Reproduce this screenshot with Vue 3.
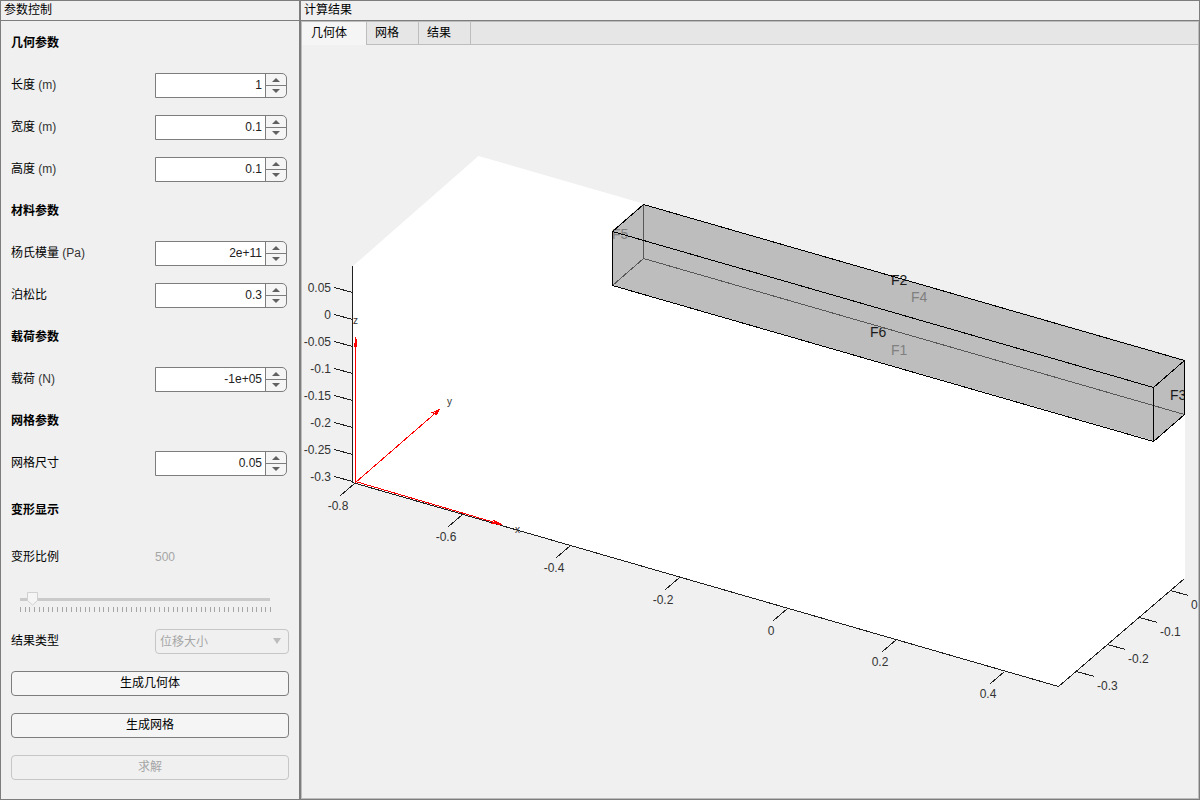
<script setup>
import { reactive, ref } from 'vue'

const rows = reactive([
  { heading: '几何参数' },
  { id: 'length', label: '长度', unit: '(m)', value: '1' },
  { id: 'width', label: '宽度', unit: '(m)', value: '0.1' },
  { id: 'height', label: '高度', unit: '(m)', value: '0.1' },
  { heading: '材料参数' },
  { id: 'young', label: '杨氏模量', unit: '(Pa)', value: '2e+11' },
  { id: 'poisson', label: '泊松比', value: '0.3' },
  { heading: '载荷参数' },
  { id: 'load', label: '载荷', unit: '(N)', value: '-1e+05' },
  { heading: '网格参数' },
  { id: 'mesh', label: '网格尺寸', value: '0.05' },
])

const tabs = ['几何体', '网格', '结果']
const activeTab = ref(0)
const scale = ref(500)
const resultType = ref('位移大小')

const sliderTicks = Array.from({ length: 55 }, (_, i) => Math.round(i * 4.63))

const zTicks = ['0.05', '0', '-0.05', '-0.1', '-0.15', '-0.2', '-0.25', '-0.3'].map((text, i) => ({
  text,
  y: 287 + i * 27,
}))
const xTicks = ['-0.8', '-0.6', '-0.4', '-0.2', '0', '0.2', '0.4'].map((text, i) => ({
  text,
  x: Math.floor(354 + i * 108.4),
  y: Math.floor(483 + i * 31.35),
}))
const yTicks = ['0', '-0.1', '-0.2', '-0.3'].map((text, i) => ({
  text,
  x: Math.round(1170 - i * 31.4),
  y: Math.round(590 + i * 27.1),
}))
</script>

<template>
  <div class="app">
    <section class="panel side">
      <h2 class="title">参数控制</h2>
      <form class="form" @submit.prevent>
        <template v-for="row in rows" :key="row.heading || row.id">
          <h3 v-if="row.heading" class="heading">{{ row.heading }}</h3>
          <div v-else class="row">
            <label :for="row.id">{{ row.label }} <span v-if="row.unit" class="unit">{{ row.unit }}</span></label>
            <div class="spinner">
              <input :id="row.id" v-model="row.value" type="text" inputmode="decimal" />
              <div class="steps">
                <button type="button" aria-label="增加">
                  <svg viewBox="0 0 8 4"><path d="M0 4 L4 0 L8 4Z" /></svg>
                </button>
                <button type="button" aria-label="减少">
                  <svg viewBox="0 0 8 4"><path d="M0 0 L4 4 L8 0Z" /></svg>
                </button>
              </div>
            </div>
          </div>
        </template>

        <h3 class="heading tall">变形显示</h3>
        <div class="row">
          <label for="scale">变形比例</label>
          <output class="muted" for="scale">{{ scale }}</output>
        </div>
        <div class="slider">
          <input id="scale" v-model="scale" type="range" min="200" max="10000" disabled />
          <svg class="ticks" viewBox="0 0 252 5" shape-rendering="crispEdges">
            <rect v-for="t in sliderTicks" :key="t" :x="t" y="0" width="1" height="5" />
          </svg>
        </div>
        <div class="row">
          <label for="type">结果类型</label>
          <div class="dropdown">
            <select id="type" v-model="resultType" disabled>
              <option>位移大小</option>
            </select>
            <svg viewBox="0 0 8 6"><path d="M0 0 H8 L4 6Z" /></svg>
          </div>
        </div>
        <button class="action" type="button">生成几何体</button>
        <button class="action" type="button">生成网格</button>
        <button class="action" type="button" disabled>求解</button>
      </form>
    </section>

    <section class="panel main">
      <h2 class="title">计算结果</h2>
      <div class="tabgroup">
        <div class="tabs" role="tablist">
          <button
            v-for="(tab, i) in tabs"
            :key="tab"
            type="button"
            role="tab"
            :aria-selected="i === activeTab"
            :class="['tab', { active: i === activeTab }]"
            @click="activeTab = i"
          >{{ tab }}</button>
        </div>
        <div class="canvas">
          <svg class="plot" viewBox="302 45 896 753" role="img" aria-label="几何体">
            <defs>
              <clipPath id="axes-area">
                <rect x="352" y="156" width="833" height="532" />
              </clipPath>
            </defs>
            <polygon class="box" points="353,266 478.5,156 1185,360 1185,578 1059,686 353,482" />
            <polygon class="beam" points="612,231 643,204 1185,360 1185,414 1154,441 612,285" />

            <g class="labels hidden-face">
              <text x="612" y="239">F5</text>
              <text x="911" y="302">F4</text>
              <text x="891" y="355">F1</text>
            </g>
            <g class="labels" clip-path="url(#axes-area)">
              <text x="891" y="285">F2</text>
              <text x="870" y="337">F6</text>
              <text x="1170" y="400">F3</text>
            </g>

            <g class="lines" shape-rendering="crispEdges">
              <path class="back" d="M643.5 204.5 V258.5 L612.5 285.5 M643.5 258.5 L1184.5 414.5" />
              <path
                class="edge"
                d="M612.5 231.5 L643.5 204.5 L1184.5 360.5 L1153.5 387.5 Z M612.5 231.5 V285.5 L1153.5 441.5 V387.5 M1153.5 441.5 L1184.5 414.5 V360.5"
              />
              <path class="axis" d="M352.5 266 V482.5 L1058.5 686.5 L1184.5 578.5" />
              <path v-for="t in zTicks" :key="'z' + t.text" class="axis" :d="`M334.5 ${t.y + 0.5} l18 5`" />
              <path v-for="t in xTicks" :key="'x' + t.text" class="axis" :d="`M${t.x + 0.5} ${t.y + 0.5} l-14 12`" />
              <path v-for="t in yTicks" :key="'y' + t.text" class="axis" :d="`M${t.x + 0.5} ${t.y + 0.5} l18 5`" />
              <path
                class="arrow"
                d="M355.5 481.5 V336.5 M354.5 342.5 V346.5 M356.5 338.5 V346.5 M355.5 481.5 L501.5 524.5 L491.5 523.5 L493.5 520.5 L501.5 524.5 M355.5 482.5 L439.5 409.5 L432.5 412.5 L436.5 414.5 L439.5 409.5"
              />
            </g>

            <g class="ticktext end">
              <text v-for="t in zTicks" :key="t.text" x="331" :y="t.y + 5">{{ t.text }}</text>
            </g>
            <g class="ticktext mid">
              <text v-for="t in xTicks" :key="t.text" :x="t.x - 16" :y="t.y + 27">{{ t.text }}</text>
            </g>
            <g class="ticktext">
              <text v-for="t in yTicks" :key="t.text" :x="t.x + 21" :y="t.y + 19">{{ t.text }}</text>
            </g>
            <g class="names">
              <text x="353" y="324">z</text>
              <text x="447" y="405">y</text>
              <text x="515" y="533">x</text>
            </g>
          </svg>
        </div>
      </div>
    </section>
  </div>
</template>

<style>
html,
body {
  margin: 0;
  background: #f0f0f0;
}
</style>

<style scoped>
.app {
  display: flex;
  height: 100vh;
  min-height: 780px;
  background: #f0f0f0;
  color: #000;
  font: 12px/16px 'Liberation Sans', 'Noto Sans CJK SC', sans-serif;
}
.app * {
  box-sizing: border-box;
}
button,
input,
select {
  margin: 0;
  padding: 0;
  font: inherit;
  color: inherit;
}
.panel {
  display: flex;
  flex-direction: column;
  border: 1px solid #7d7d7d;
}
.side {
  flex: 0 0 300px;
}
.main {
  flex: 1;
  min-width: 0;
}
.title {
  margin: 0;
  height: 20px;
  padding: 0 3px;
  border-bottom: 1px solid #7d7d7d;
  font-size: 12px;
  font-weight: 400;
  line-height: 18px;
}
.form {
  display: flex;
  flex-direction: column;
  gap: 17px;
  padding: 10px;
}
.heading {
  margin: 0;
  font-size: 12px;
  font-weight: 700;
  line-height: 25px;
  height: 25px;
}
.heading.tall {
  height: 35px;
  line-height: 35px;
}
.row {
  display: grid;
  grid-template-columns: 1fr 1fr;
  column-gap: 10px;
  height: 25px;
  line-height: 25px;
}
.unit {
  color: #333;
}
.muted {
  color: #a6a6a6;
}
.spinner {
  display: flex;
  margin-right: 2px;
  border: 1px solid #7d7d7d;
  border-radius: 0 5px 5px 0;
  background: #f5f5f5;
  overflow: hidden;
}
.spinner input {
  flex: 1;
  min-width: 0;
  height: 23px;
  padding-right: 3px;
  border: 0;
  background: #fff;
  color: #212121;
  text-align: right;
}
.steps {
  display: grid;
  grid-template-rows: 11px 12px;
  width: 21px;
  border-left: 1px solid #7d7d7d;
}
.steps button {
  display: flex;
  align-items: center;
  justify-content: center;
  padding-top: 1px;
  border: 0;
  background: none;
}
.steps button + button {
  padding: 0 0 1px;
  border-top: 1px solid #7d7d7d;
}
.steps svg {
  width: 8px;
  height: 4px;
  fill: #616161;
}
.slider {
  display: flex;
  flex-direction: column;
  height: 25px;
  padding: 5px 0 0 9px;
}
.slider input {
  appearance: none;
  width: 250px;
  height: 14px;
  background: linear-gradient(#cacaca, #cacaca) 0 6px / 100% 3px no-repeat;
}
.slider input::-webkit-slider-thumb {
  appearance: none;
  width: 11px;
  height: 14px;
  border: 0;
  background: url("data:image/svg+xml,%3Csvg xmlns='http://www.w3.org/2000/svg' width='11' height='14'%3E%3Cpath d='M.5 .5H10.5V8.5L5.5 13L.5 8.5Z' fill='%23f5f5f5' stroke='%23d0d0d0'/%3E%3C/svg%3E") no-repeat;
}
.ticks {
  width: 252px;
  height: 5px;
  margin-top: 1px;
  fill: #a6a6a6;
}
.dropdown {
  position: relative;
}
.dropdown select {
  display: block;
  appearance: none;
  width: 100%;
  height: 25px;
  padding: 0 4px;
  border: 1px solid #c6c6c6;
  border-radius: 4px;
  background: #f0f0f0;
  color: #a6a6a6;
  opacity: 1;
}
.dropdown svg {
  position: absolute;
  top: 9px;
  right: 8px;
  width: 8px;
  height: 6px;
  fill: #bdbdbd;
}
.action {
  height: 25px;
  padding-bottom: 2px;
  border: 1px solid #7d7d7d;
  border-radius: 4px;
  background: #f5f5f5;
}
.action:disabled {
  border-color: #c6c6c6;
  background: #f0f0f0;
  color: #a6a6a6;
}
.tabgroup {
  display: flex;
  flex: 1;
  flex-direction: column;
  min-height: 0;
  border: 1px solid #bdbdbd;
}
.tabs {
  display: flex;
  height: 23px;
  background: linear-gradient(#bdbdbd, #bdbdbd) bottom / 100% 1px no-repeat #e6e6e6;
}
.tab {
  padding: 0 19px 0 8px;
  border: 0;
  border-right: 1px solid #bdbdbd;
  background: none;
}
.tab:not(.active) {
  border-bottom: 1px solid #bdbdbd;
}
.tab.active {
  padding-left: 9px;
  padding-bottom: 1px;
  background: #f5f5f5;
}
.canvas {
  flex: 1;
  min-height: 0;
}
.plot {
  display: block;
  width: 100%;
  height: 100%;
}
.box {
  fill: #fff;
}
.beam {
  fill: #bdbdbd;
}
.lines path {
  fill: none;
  stroke-width: 1px;
}
.lines .edge {
  stroke: #000;
}
.lines .back {
  stroke: #575757;
}
.lines .axis {
  stroke: #212121;
}
.lines .arrow {
  stroke: #f00;
}
.labels {
  font-size: 14px;
  fill: #1a1a1a;
}
.hidden-face {
  fill: #808080;
}
.ticktext {
  font-size: 12px;
  fill: #333;
}
.end {
  text-anchor: end;
}
.mid {
  text-anchor: middle;
}
.names {
  font-size: 10px;
  fill: #333;
}
</style>
